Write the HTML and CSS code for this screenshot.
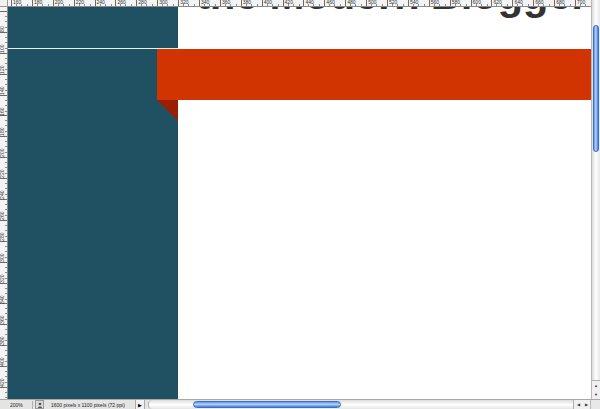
FILE: index.html
```html
<!DOCTYPE html>
<html>
<head>
<meta charset="utf-8">
<link rel="stylesheet" href="styles.css">
</head>
<body>
<div class="app">
  <div class="ruler-corner"></div>
  <div class="ruler-top">
    <span class="tick">160</span><span class="tick">180</span><span class="tick">200</span><span class="tick">220</span><span class="tick">240</span><span class="tick">260</span><span class="tick">280</span><span class="tick">300</span><span class="tick">320</span><span class="tick">340</span><span class="tick">360</span><span class="tick">380</span><span class="tick">400</span><span class="tick">420</span><span class="tick">440</span><span class="tick">460</span><span class="tick">480</span><span class="tick">500</span><span class="tick">520</span><span class="tick">540</span><span class="tick">560</span><span class="tick">580</span><span class="tick">600</span><span class="tick">620</span><span class="tick">640</span><span class="tick">660</span><span class="tick">680</span><span class="tick">700</span>
  </div>
  <div class="vscroll">
    <div class="vtrack">
      <div class="vthumb"></div>
    </div>
    <div class="varrows">
      <span class="arr">&#9650;</span>
      <span class="arr">&#9660;</span>
    </div>
  </div>
  <div class="ruler-left">
    <span class="vtick"><i>80</i></span><span class="vtick"><i>100</i></span><span class="vtick"><i>120</i></span><span class="vtick"><i>140</i></span><span class="vtick"><i>160</i></span><span class="vtick"><i>180</i></span><span class="vtick"><i>200</i></span><span class="vtick"><i>220</i></span><span class="vtick"><i>240</i></span><span class="vtick"><i>260</i></span><span class="vtick"><i>280</i></span><span class="vtick"><i>300</i></span><span class="vtick"><i>320</i></span><span class="vtick"><i>340</i></span><span class="vtick"><i>360</i></span><span class="vtick"><i>380</i></span><span class="vtick"><i>400</i></span><span class="vtick"><i>420</i></span><span class="vtick"><i>440</i></span>
  </div>
  <div class="canvas">
    <div class="sidebar">
      <div class="sidebar-top"></div>
      <div class="sidebar-line"></div>
      <div class="sidebar-rest"></div>
    </div>
    <div class="main">
      <h1 class="title">the Modern Blogger</h1>
      <div class="ribbon">
        <div class="ribbon-bar"></div>
        <div class="ribbon-fold"></div>
      </div>
    </div>
  </div>
  <div class="status">
    <span class="zoom">200%</span>
    <span class="status-icon">
      <svg width="6" height="6" viewBox="0 0 6 6"><circle cx="3" cy="2" r="1.3" fill="#555"/><path d="M1 6 C1 4 5 4 5 6Z" fill="#555"/></svg>
    </span>
    <span class="docinfo">1600 pixels x 1100 pixels (72 ppi)</span>
    <span class="status-arrow">&#9654;</span>
    <div class="hscroll">
      <div class="hthumb"></div>
    </div>
    <div class="harrows">
      <span class="arr">&#9664;</span>
      <span class="arr">&#9654;</span>
    </div>
    <div class="hcorner"></div>
  </div>
</div>
</body>
</html>
```
FILE: styles.css
```css
html, body {
  margin: 0;
  padding: 0;
  background: #ffffff;
}
body {
  width: 600px;
  height: 409px;
  overflow: hidden;
  font-family: "Liberation Sans", Arial, sans-serif;
}
.app {
  display: grid;
  grid-template-columns: 8px 583px 9px;
  grid-template-rows: 7px 392px 10px;
  width: 600px;
  height: 409px;
}
.ruler-corner {
  background: #f2f2f2;
  border-right: 1px solid #9a9a9a;
  border-bottom: 1px solid #9a9a9a;
  box-sizing: border-box;
}
.ruler-top {
  position: relative;
  z-index: 2;
  display: flex;
  padding-left: 3px;
  background: #f4f4f4;
  border-bottom: 1px solid #8a8a8a;
  box-sizing: border-box;
  overflow: hidden;
}
.tick {
  flex: 0 0 20.9px;
  box-sizing: border-box;
  border-left: 1px solid #6a6a6a;
  font-size: 5px;
  line-height: 5px;
  padding-left: 1px;
  color: #333;
  background-image: repeating-linear-gradient(90deg, transparent 0 4.2px, #8a8a8a 4.2px 5.2px);
  background-size: 100% 2px;
  background-repeat: no-repeat;
  background-position: bottom left;
}
.ruler-left {
  display: flex;
  flex-direction: column;
  padding-top: 4px;
  background: #f4f4f4;
  border-right: 1px solid #8a8a8a;
  box-sizing: border-box;
  overflow: hidden;
}
.vtick {
  flex: 0 0 20.9px;
  box-sizing: border-box;
  border-top: 1px solid #6a6a6a;
  background-image: repeating-linear-gradient(180deg, transparent 0 4.2px, #8a8a8a 4.2px 5.2px);
  background-size: 2px 100%;
  background-repeat: no-repeat;
  background-position: top right;
  display: flex;
  justify-content: flex-start;
}
.vtick i {
  font-style: normal;
  font-size: 5px;
  line-height: 5px;
  color: #333;
  writing-mode: vertical-rl;
  transform: rotate(180deg);
  padding-bottom: 1px;
}
.canvas {
  display: flex;
  overflow: hidden;
  background: #ffffff;
}
.sidebar {
  flex: 0 0 170px;
  display: flex;
  flex-direction: column;
}
.sidebar-top {
  height: 41px;
  background: #1f5163;
}
.sidebar-line {
  height: 1px;
  background: #e8f1f4;
}
.sidebar-rest {
  flex: 1;
  background: #1f5163;
}
.main {
  flex: 1;
  display: flex;
  flex-direction: column;
  min-width: 0;
}
.title {
  margin: -32px 0 0 18px;
  height: 40px;
  font-size: 42px;
  line-height: 40px;
  font-weight: bold;
  color: #333333;
  white-space: nowrap;
  letter-spacing: -0.3px;
}
.ribbon {
  margin: 34px 0 0 -21px;
  position: relative;
  z-index: 1;
}
.ribbon-bar {
  height: 51px;
  background: #d13400;
}
.ribbon-fold {
  width: 0;
  height: 0;
  border-top: 21px solid #982000;
  border-left: 21px solid transparent;
}
.vscroll {
  grid-column: 3;
  grid-row: 1 / 3;
  display: flex;
  flex-direction: column;
  background: #f6f6f6;
  border-left: 1px solid #b8b8b8;
  box-sizing: border-box;
}
.vtrack {
  flex: 1;
  padding-top: 25px;
  background: linear-gradient(90deg, #dcdcdc, #ffffff 50%, #e6e6e6);
}
.vthumb {
  margin: 0 1px;
  height: 127px;
  border-radius: 4px;
  border: 1px solid #3b6fc4;
  box-sizing: border-box;
  background: linear-gradient(90deg, #5d8fe0, #b8d6fb 45%, #6a9be6 80%, #4a7fd4);
}
.varrows {
  height: 18px;
  display: flex;
  flex-direction: column;
  border-top: 1px solid #b0b0b0;
  background: #f0f0f0;
}
.arr {
  flex: 1;
  display: flex;
  align-items: center;
  justify-content: center;
  font-size: 4px;
  line-height: 4px;
  color: #333;
}
.status {
  grid-column: 1 / 4;
  display: flex;
  align-items: center;
  background: #e4e4e4;
  border-top: 1px solid #a8a8a8;
  box-sizing: border-box;
  font-size: 5px;
  color: #222;
}
.zoom {
  width: 22px;
  padding-left: 10px;
  border-right: 1px solid #b0b0b0;
  line-height: 8px;
}
.status-icon {
  width: 7px;
  height: 7px;
  margin-left: 2px;
  border: 1px solid #9a9a9a;
  background: #d8d8d8;
  display: flex;
  align-items: center;
  justify-content: center;
}
.docinfo {
  margin-left: 7px;
  width: 84px;
  white-space: nowrap;
}
.status-arrow {
  width: 8px;
  height: 9px;
  display: flex;
  align-items: center;
  justify-content: center;
  font-size: 5px;
  color: #000;
  background: #f2f2f2;
  border-left: 1px solid #aaa;
  border-right: 1px solid #aaa;
}
.hscroll {
  flex: 1;
  height: 9px;
  display: flex;
  align-items: center;
  padding-left: 44px;
  margin-left: 3px;
  background: linear-gradient(180deg, #dcdcdc, #ffffff 50%, #e6e6e6);
  border-left: 1px solid #b0b0b0;
  border-radius: 4px 0 0 4px;
}
.hthumb {
  width: 148px;
  height: 7px;
  border-radius: 4px;
  border: 1px solid #3b6fc4;
  box-sizing: border-box;
  background: linear-gradient(180deg, #5d8fe0, #b8d6fb 45%, #6a9be6 80%, #4a7fd4);
}
.harrows {
  width: 16px;
  height: 9px;
  display: flex;
  border-left: 1px solid #b0b0b0;
  background: #f0f0f0;
}
.hcorner {
  width: 9px;
  height: 9px;
  background: #e8e8e8;
  border-left: 1px solid #b8b8b8;
}
```
